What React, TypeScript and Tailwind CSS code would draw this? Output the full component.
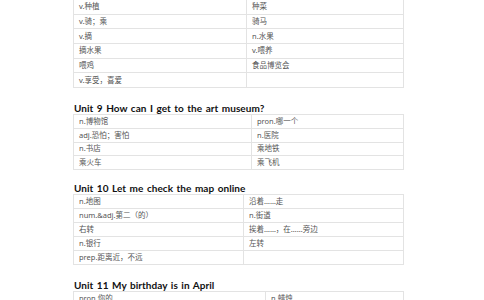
import React from "react";

type Row = [string, string];

function VocabTable({ rows, split, rowH }: { rows: Row[]; split: string; rowH: string }) {
  return (
    <div className="w-[331px] border-t border-l border-r border-[#e3e3e3]">
      {rows.map((r, i) => (
        <div key={i} className={`flex border-b border-[#e3e3e3] ${rowH}`}>
          <div className={`${split} shrink-0 border-r border-[#e3e3e3] pl-[5px] flex items-center`}>{r[0]}</div>
          <div className="flex-1 pl-[5px] flex items-center">{r[1]}</div>
        </div>
      ))}
    </div>
  );
}

function Heading({ children, mt }: { children: React.ReactNode; mt: string }) {
  return (
    <div
      className={`${mt} h-[12px] leading-[12px] pl-[1px] text-[10px] font-bold text-[#111] tracking-[0.05px] [word-spacing:1px] whitespace-nowrap`}
      style={{ fontFamily: 'Lato, "Noto Sans CJK SC", sans-serif' }}
    >
      {children}
    </div>
  );
}

export default function App() {
  return (
    <div
      className="w-[484px] h-[300px] overflow-hidden bg-white pl-[73px] text-[7.5px] text-[#555]"
      style={{ fontFamily: '"Noto Sans", "Noto Sans CJK SC", sans-serif' }}
    >
      <div className="-mt-[1px]">
        <VocabTable
          split="w-[173px]"
          rowH="h-[14.7px]"
          rows={[
            ["v.种植", "种菜"],
            ["v.骑；乘", "骑马"],
            ["v.摘", "n.水果"],
            ["摘水果", "v.喂养"],
            ["喂鸡", "食品博览会"],
            ["v.享受，喜爱", ""],
          ]}
        />
      </div>
      <Heading mt="mt-[14px]">Unit 9 How can I get to the art museum?</Heading>
      <VocabTable
        split="w-[178px]"
        rowH="h-[13.7px]"
        rows={[
          ["n.博物馆", "pron.哪一个"],
          ["adj.恐怕；害怕", "n.医院"],
          ["n.书店", "乘地铁"],
          ["乘火车", "乘飞机"],
        ]}
      />
      <Heading mt="mt-[12.5px]">Unit 10 Let me check the map online</Heading>
      <VocabTable
        split="w-[170px]"
        rowH="h-[14px]"
        rows={[
          ["n.地图", "沿着……走"],
          ["num.&adj.第二（的）", "n.街道"],
          ["右转", "挨着……，在……旁边"],
          ["n.银行", "左转"],
          ["prep.距离近，不远", ""],
        ]}
      />
      <Heading mt="mt-[14px]">Unit 11 My birthday is in April</Heading>
      <VocabTable
        split="w-[192px]"
        rowH="h-[14px]"
        rows={[
          ["pron.你的", "n.蜡烛"],
          ["", ""],
        ]}
      />
    </div>
  );
}
